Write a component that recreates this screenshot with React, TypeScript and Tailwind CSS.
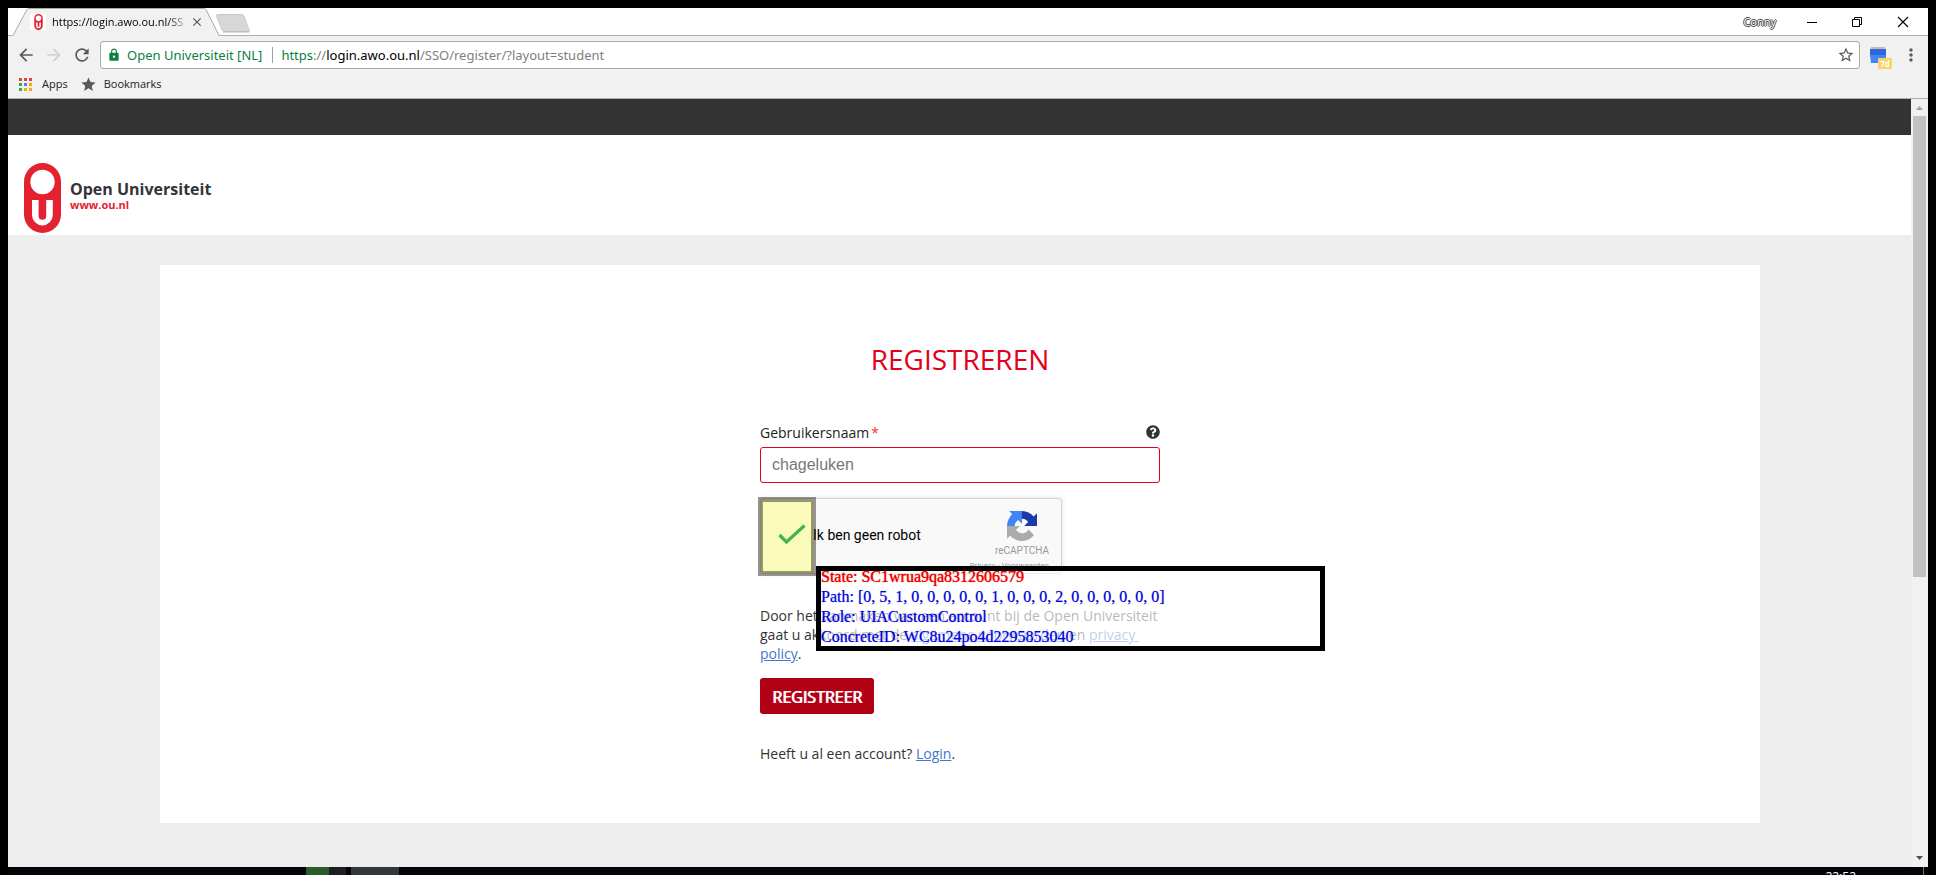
import React from "react";
import {
  MdArrowBack,
  MdArrowForward,
  MdClose,
  MdLock,
  MdMoreVert,
  MdRefresh,
  MdStar,
  MdStarBorder,
} from "react-icons/md";
import { FaQuestionCircle } from "react-icons/fa";

function OuMark({ className }: { className?: string }) {
  return (
    <svg viewBox="0 0 37 70" className={className} aria-hidden="true">
      <rect width="37" height="70" rx="18.5" fill="#e3212f" />
      <circle cx="18.5" cy="19" r="12.2" fill="#fff" />
      <path d="M8 37h6.6v16a3.8 3.8 0 0 0 7.6 0V37h6.6v15a10.4 10.4 0 0 1-20.8 0z" fill="#fff" />
    </svg>
  );
}

function RecaptchaLogo() {
  return (
    <svg viewBox="0 0 64 64" className="size-[30px]" aria-hidden="true">
      <path
        fill="#1c3aa9"
        d="M64 31.955l-.033-1.37V4.687l-7.16 7.16C50.948 4.674 42.033.093 32.05.093c-10.4 0-19.622 4.96-25.458 12.64l11.736 11.86a15.55 15.55 0 0 1 4.754-5.334c2.05-1.6 4.952-2.906 8.968-2.906.485 0 .86.057 1.135.163 4.976.393 9.288 3.14 11.828 7.124l-8.307 8.307L64 31.953"
      />
      <path
        fill="#4285f4"
        d="M31.862.094l-1.37.033H4.594l7.16 7.16C4.58 13.147 0 22.06 0 32.046c0 10.4 4.96 19.622 12.64 25.458L24.5 45.768a15.55 15.55 0 0 1-5.334-4.754c-1.6-2.05-2.906-4.952-2.906-8.968 0-.485.057-.86.163-1.135.393-4.976 3.14-9.288 7.124-11.828l8.307 8.307L31.86.095"
      />
      <path
        fill="#ababab"
        d="M.001 32.045l.033 1.37v25.898l7.16-7.16c5.86 7.173 14.774 11.754 24.76 11.754 10.4 0 19.622-4.96 25.458-12.64l-11.736-11.86a15.55 15.55 0 0 1-4.754 5.334c-2.05 1.6-4.952 2.906-8.968 2.906-.485 0-.86-.057-1.135-.163-4.976-.393-9.288-3.14-11.828-7.124l8.307-8.307L.001 32.045"
      />
    </svg>
  );
}

function TabStrip() {
  return (
    <div className="flex h-7 items-stretch bg-white">
      <div className="flex w-[5px] border-b border-[#b0b0b0]" />
      <div className="relative w-[206px]">
        <svg viewBox="0 0 206 28" className="absolute inset-0 h-7 w-[206px]" aria-hidden="true">
          <path d="M0 28V27.5L14 1.5Q14.5.5 16 .5H191Q192.500.5 193 1.500L206 27.5V28z" fill="#f1f1f1" />
          <path d="M0 27.5L14 1.500Q14.500.5 16 .5H191Q192.500.5 193 1.500L206 27.500" fill="none" stroke="#a9a9a9" />
        </svg>
        <div className="relative flex h-full items-center pl-[17px]">
          <span className="flex h-4 w-4 items-center justify-center bg-white">
            <OuMark className="h-4 w-[9px]" />
          </span>
          <span className="ml-[6px] w-[134px] overflow-hidden text-[11px] leading-4 whitespace-nowrap text-black [mask-image:linear-gradient(to_right,black_115px,transparent_138px)]">
            https://login.awo.ou.nl/SS
          </span>
          <button aria-label="Close tab" className="ml-1 text-[#555]">
            <MdClose className="size-3.5" />
          </button>
        </div>
      </div>
      <div className="flex flex-1 items-center border-b border-[#b0b0b0]">
        <button aria-label="New tab" className="-ml-1 pt-1">
          <svg viewBox="0 0 36 19" className="block h-[19px] w-9" aria-hidden="true">
            <path d="M3 .5H26.500Q28 .5 29 2L34.500 17.500H10Q8 17.500 7 16L1.500 2Q1.200.5 3 .5z" fill="#d7d7d7" stroke="#c8c8c8" />
            <path d="M8 18H34" stroke="#b5b5b5" />
          </svg>
        </button>
        <div className="ml-auto flex h-full items-center">
          <button className="text-[11px] leading-4 text-white [text-shadow:1px_0_#444,-1px_0_#444,0_1px_#444,0_-1px_#444]">
            Conny
          </button>
          <button aria-label="Minimize" className="ml-[30px]">
            <svg viewBox="0 0 12 12" className="size-3" aria-hidden="true">
              <path d="M1 6.500H11" stroke="#000" />
            </svg>
          </button>
          <button aria-label="Restore" className="ml-[33px]">
            <svg viewBox="0 0 12 12" className="size-3" fill="none" stroke="#000" aria-hidden="true">
              <path d="M1.500 3.500H8.500V10.500H1.500zM3.500 3.500V1.500H10.500V8.500H8.500" />
            </svg>
          </button>
          <button aria-label="Close" className="mr-[19px] ml-[34px]">
            <svg viewBox="0 0 12 12" className="size-3" aria-hidden="true">
              <path d="M1 1L11 11M11 1L1 11" stroke="#000" strokeWidth="1.100" />
            </svg>
          </button>
        </div>
      </div>
    </div>
  );
}

function Toolbar() {
  return (
    <div className="flex h-9 items-center bg-[#f1f1f1] pt-1 pb-[2px] pl-2">
      <button aria-label="Back" className="text-[#5a5a5a]">
        <MdArrowBack className="size-5" />
      </button>
      <button aria-label="Forward" className="ml-2 text-[#d0d0d0]">
        <MdArrowForward className="size-5" />
      </button>
      <button aria-label="Reload" className="ml-2 text-[#5a5a5a]">
        <MdRefresh className="size-5" />
      </button>
      <div className="ml-2 flex h-7 flex-1 items-center rounded-[3px] border border-[#a9a9a9] bg-white pr-1 pl-[6px] font-['Noto_Sans',sans-serif] text-[13px] leading-5">
        <MdLock className="size-3.5 text-[#0b8043]" />
        <span className="ml-[6px] text-[#0b8043]">Open Universiteit [NL]</span>
        <span className="mr-2 ml-[10px] h-4 w-px bg-[#a0a0a0]" />
        <div role="textbox" aria-label="Address" className="flex-1 whitespace-nowrap text-[#808080]">
          <span className="text-[#0b8043]">https</span>://<span className="text-black">login.awo.ou.nl</span>
          /SSO/register/?layout=student
        </div>
        <button aria-label="Bookmark this page" className="text-[#5a5a5a]">
          <MdStarBorder className="size-[18px]" />
        </button>
      </div>
      <button aria-label="Calendar" className="relative ml-2 h-6 w-6">
        <svg viewBox="0 0 24 24" className="size-6" aria-hidden="true">
          <path d="M3 4H17V6H3z" fill="#bdbdbd" />
          <path d="M2 6H18V12H2z" fill="#3367d6" />
          <path d="M2 12H18V20H3z" fill="#4285f4" />
        </svg>
        <span className="absolute top-[15px] left-[10px] h-[11px] w-[14px] rounded-[1px] bg-[#fbd267] text-center text-[8px] leading-[11px] font-bold text-white">
          7d
        </span>
      </button>
      <button aria-label="Menu" className="mr-[7px] ml-[9px] text-[#5a5a5a]">
        <MdMoreVert className="size-5" />
      </button>
    </div>
  );
}

const appColors = ["#ea4335", "#ea4335", "#ea4335", "#34a853", "#4285f4", "#f9ab00", "#34a853", "#f9ab00", "#f9ab00"];

function BookmarksBar() {
  return (
    <div className="flex h-[27px] items-center border-b border-[#b0b0b0] bg-[#f1f1f1] pb-[2px] pl-[11px] text-[11px] leading-4 text-[#222]">
      <button className="flex items-center gap-[10px]">
        <span className="grid grid-cols-3 gap-[2px]">
          {appColors.map((c, i) => (
            <span key={i} className="size-[3px]" style={{ backgroundColor: c }} />
          ))}
        </span>
        Apps
      </button>
      <button className="ml-3 flex items-center gap-[7px]">
        <MdStar className="size-[17px] text-[#5a5a5a]" />
        Bookmarks
      </button>
    </div>
  );
}

function Scrollbar() {
  return (
    <div className="flex w-[17px] flex-col items-center bg-[#f1f1f1]">
      <svg viewBox="0 0 17 17" className="h-[17px] w-[17px]" aria-hidden="true">
        <path d="M5 11L8.500 7L12 11z" fill="#a3a3a3" />
      </svg>
      <div className="h-[60%] w-[13px] bg-[#c1c1c1]" />
      <svg viewBox="0 0 17 17" className="mt-auto h-[17px] w-[17px]" aria-hidden="true">
        <path d="M5 6L8.500 10L12 6z" fill="#505050" />
      </svg>
    </div>
  );
}

function InspectorOverlay() {
  return (
    <>
      <div className="absolute -top-px -left-[2px] h-[79px] w-[58px] border-2 border-black/40">
        <div className="h-full border-[3px] border-black/40 bg-[#ffff00]/25" />
      </div>
      <div className="absolute top-[68px] left-[56px] h-[85px] w-[509px] border-[5px] border-black bg-white/65 font-['Liberation_Serif',serif] text-[16px] leading-5 whitespace-nowrap text-[#0000e0]">
        <div className="-mt-1">
          <p className="text-[#f00000] [text-shadow:0_0_1px_#f00000]">State: SC1wrua9qa8312606579</p>
          <p className="[text-shadow:0_0_1px_#0000e080]">Path: [0, 5, 1, 0, 0, 0, 0, 0, 1, 0, 0, 0, 2, 0, 0, 0, 0, 0, 0]</p>
          <p className="[text-shadow:0_0_1px_#0000e080]">Role: UIACustomControl</p>
          <p className="[text-shadow:0_0_1px_#0000e080]">ConcreteID: WC8u24po4d2295853040</p>
        </div>
      </div>
    </>
  );
}

function Captcha() {
  return (
    <div className="relative mt-[15px] h-[76px]">
      <div className="flex h-[76px] w-[302px] rounded-[3px] border border-[#d3d3d3] bg-[#f9f9f9] font-[Roboto,sans-serif] shadow-[0_0_4px_1px_rgba(0,0,0,0.08)]">
        <label className="flex flex-1 items-center pb-[2px] pl-4 text-[14px] leading-4 text-black">
          <input type="checkbox" defaultChecked className="sr-only" />
          <svg viewBox="0 0 30 24" className="mr-[6px] h-6 w-[30px]" aria-hidden="true">
            <path d="M2.500 12L9.500 19L27.500 2.500" fill="none" stroke="#009c63" strokeWidth="3.200" />
          </svg>
          Ik ben geen robot
        </label>
        <div className="mr-3 flex w-[80px] flex-col items-end pt-3 text-[#999]">
          <span className="mr-3">
            <RecaptchaLogo />
          </span>
          <span className="mt-[2px] text-[10px] leading-4">reCAPTCHA</span>
          <span className="text-[8px] leading-[14px] whitespace-nowrap">
            <a href="#privacy">Privacy</a> - <a href="#voorwaarden">Voorwaarden</a>
          </span>
        </div>
      </div>
      <InspectorOverlay />
    </div>
  );
}

function RegisterForm() {
  return (
    <form className="mx-auto w-[400px] text-[14px] text-[#333]" onSubmit={(e) => e.preventDefault()}>
      <h1 className="text-center text-[28px] leading-10 text-[#e2001a]">REGISTREREN</h1>
      <div className="mt-[41px] flex h-6 items-center justify-between">
        <label htmlFor="username" className="text-[#222]">
          Gebruikersnaam<span className="ml-[2px] text-[#ff2a2a]">*</span>
        </label>
        <button type="button" aria-label="Help" className="text-[#333]">
          <FaQuestionCircle className="size-3.5" />
        </button>
      </div>
      <input
        id="username"
        defaultValue="chageluken"
        className="mt-[3px] block h-9 w-full rounded-[3px] border border-[#e2001a] bg-white px-[11px] font-['Liberation_Sans',sans-serif] text-[16px] text-[#777] outline-none"
      />
      <Captcha />
      <p className="mt-8 leading-[19px]">
        Door het aanmaken van een account bij de Open Universiteit gaat u akkoord met de{" "}
        <a href="#voorwaarden" className="text-[#4477cc] underline">
          algemene voorwaarden
        </a>{" "}
        en{" "}
        <a href="#policy" className="text-[#4477cc] underline">
          privacy&nbsp;
          <wbr />
          policy
        </a>
        .
      </p>
      <button
        type="submit"
        className="mt-[15px] block h-9 rounded-[3px] bg-[#b20014] px-3 pt-[2px] text-[16px] leading-5 text-white [text-shadow:1px_0_white]"
      >
        REGISTREER
      </button>
      <p className="mt-[30px] leading-5">
        Heeft u al een account?{" "}
        <a href="#login" className="text-[#4477cc] underline">
          Login
        </a>
        .
      </p>
    </form>
  );
}

export default function App() {
  return (
    <div className="flex h-screen flex-col bg-black px-2 pt-2 font-['Open_Sans','Noto_Sans',sans-serif]">
      <header>
        <TabStrip />
        <Toolbar />
        <BookmarksBar />
      </header>
      <div className="flex min-h-0 flex-1">
        <main className="min-w-0 flex-1 overflow-hidden bg-[#eee]">
          <div className="h-9 bg-[#333]" />
          <div className="flex h-[100px] bg-white pt-7 pl-4">
            <a href="#home" className="flex">
              <OuMark className="h-[70px] w-[37px]" />
              <span className="ml-[9px] pt-4 font-bold">
                <span className="block text-[16px] leading-5 text-[#333438]">Open Universiteit</span>
                <span className="block text-[11px] leading-3 text-[#e3212f]">www.ou.nl</span>
              </span>
            </a>
          </div>
          <div className="pt-[30px] pl-px">
            <section className="mx-auto max-w-[1600px] bg-white pt-[74px] pb-[59px]">
              <RegisterForm />
            </section>
          </div>
        </main>
        <Scrollbar />
      </div>
      <footer className="flex h-2 shrink-0 overflow-hidden bg-[#02040a]">
        <span className="ml-[298px] w-[23px] bg-[#2a5c28]" />
        <span className="w-[17px] bg-[#1b1f22]" />
        <span className="ml-[5px] w-12 bg-[#35383b]" />
        <span className="mr-[67px] ml-auto pt-[2px] text-[12px] leading-4 text-white">22:52</span>
        <span className="mr-1 w-px bg-[#777]" />
      </footer>
    </div>
  );
}
